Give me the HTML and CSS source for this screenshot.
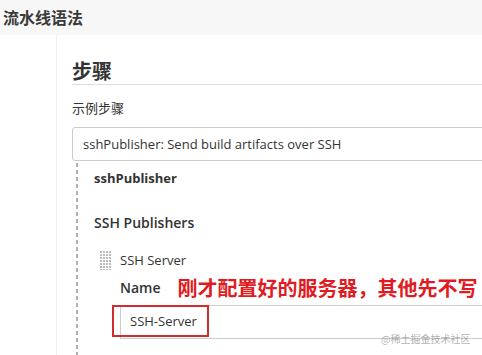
FILE: index.html
```html
<!DOCTYPE html>
<html lang="zh-CN">
<head>
    <meta charset="UTF-8">
    <meta name="viewport" content="width=device-width, initial-scale=1.0">
    <title>流水线语法</title>
    <link rel="stylesheet" href="styles.css">
</head>
<body>

    <div class="page-title">流水线语法</div>

    <div class="layout">
        <div class="side"></div>

        <div class="content">
            <h2 class="section-title">步骤</h2>
            <div class="field-label">示例步骤</div>
            <div class="select-box">sshPublisher: Send build artifacts over SSH</div>

            <div class="step-config">
                <div class="step-name">sshPublisher</div>
                <div class="group-title">SSH Publishers</div>

                <div class="repeated">
                    <div class="repeated-head"><span class="grip"></span>SSH Server</div>
                    <div class="name-row">
                        <span class="field-name">Name</span>
                        <span class="note">刚才配置好的服务器，其他先不写</span>
                    </div>
                    <div class="text-input">
                        <span class="mark">SSH-Server</span>
                    </div>
                </div>
            </div>
        </div>
    </div>

    <div class="watermark">@稀土掘金技术社区</div>

</body>
</html>
```

FILE: styles.css
```css
body {
    font-family: "Open Sans", "Noto Sans CJK SC", sans-serif;
    color: #333;
    background-color: #fff;
    margin: 0;
    padding: 0;
    width: 482px;
    height: 355px;
    overflow: hidden;
    position: relative;
}

/* Cabecera */
.page-title {
    height: 35px;
    line-height: 35px;
    padding-left: 3px;
    background-color: #f7f7f7;
    font-family: "Noto Sans CJK SC", sans-serif;
    font-size: 16px;
    font-weight: bold;
    color: #3a3a3a;
}

.layout {
    display: flex;
    height: 320px;
    overflow: hidden;
}

.side {
    width: 56px;
    flex-shrink: 0;
    border-right: 1px solid #f0f0f0;
}

.content {
    flex: 1;
    padding-left: 15px;
    margin-right: -30px;
}

.section-title {
    margin: 25px 0 0 0;
    padding-bottom: 2px;
    font-family: "Noto Sans CJK SC", sans-serif;
    font-size: 20px;
    line-height: 22px;
    font-weight: bold;
    color: #333;
    border-bottom: 1px solid #ddd;
}

.field-label {
    margin-top: 13px;
    font-family: "Noto Sans CJK SC", sans-serif;
    font-size: 13px;
    line-height: 20px;
    color: #333;
}

.select-box {
    margin-top: 9px;
    height: 32px;
    line-height: 32px;
    padding-left: 10px;
    border: 1px solid #ccc;
    border-radius: 3px;
    font-size: 13px;
    color: #333;
}

/* Configuración del paso */
.step-config {
    margin: 2px 0 0 4px;
    padding-left: 18px;
    height: 200px;
    background: repeating-linear-gradient(to bottom, #b0b0b0 0, #b0b0b0 4px, transparent 4px, transparent 7px) left top / 2px 100% no-repeat;
}

.step-name {
    padding-top: 5px;
    font-size: 13px;
    font-weight: bold;
    line-height: 20px;
}

.group-title {
    margin-top: 25px;
    font-size: 14px;
    font-weight: 600;
    line-height: 20px;
}

.repeated {
    margin-top: 17px;
    padding-left: 6px;
}

.repeated-head {
    display: flex;
    align-items: center;
    font-size: 13px;
    line-height: 20px;
}

.grip {
    width: 12px;
    height: 19px;
    margin-right: 8px;
    background-image: radial-gradient(circle at 1px 1px, #bbb 0, #bbb 1px, transparent 1px);
    background-size: 3px 3px;
}

.name-row {
    display: flex;
    align-items: center;
    margin-top: 2px;
    padding-left: 20px;
    height: 30px;
}

.field-name {
    font-size: 14px;
    font-weight: 600;
}

.note {
    margin-left: 17px;
    font-family: "Noto Sans CJK SC", sans-serif;
    font-size: 20px;
    font-weight: bold;
    color: #e01b22;
}

.text-input {
    margin-top: 3px;
    margin-left: 20px;
    height: 32px;
    border: 1px solid #ccc;
    border-right: none;
    position: relative;
}

.mark {
    position: absolute;
    left: -9px;
    top: -1px;
    width: 77px;
    height: 28px;
    line-height: 28px;
    padding-left: 16px;
    border: 2px solid #d22c2f;
    font-size: 13px;
    color: #333;
}

.watermark {
    position: absolute;
    left: 381px;
    top: 331px;
    font-family: "Noto Sans CJK SC", sans-serif;
    font-size: 10px;
    color: rgba(120, 120, 120, 0.6);
}
```
